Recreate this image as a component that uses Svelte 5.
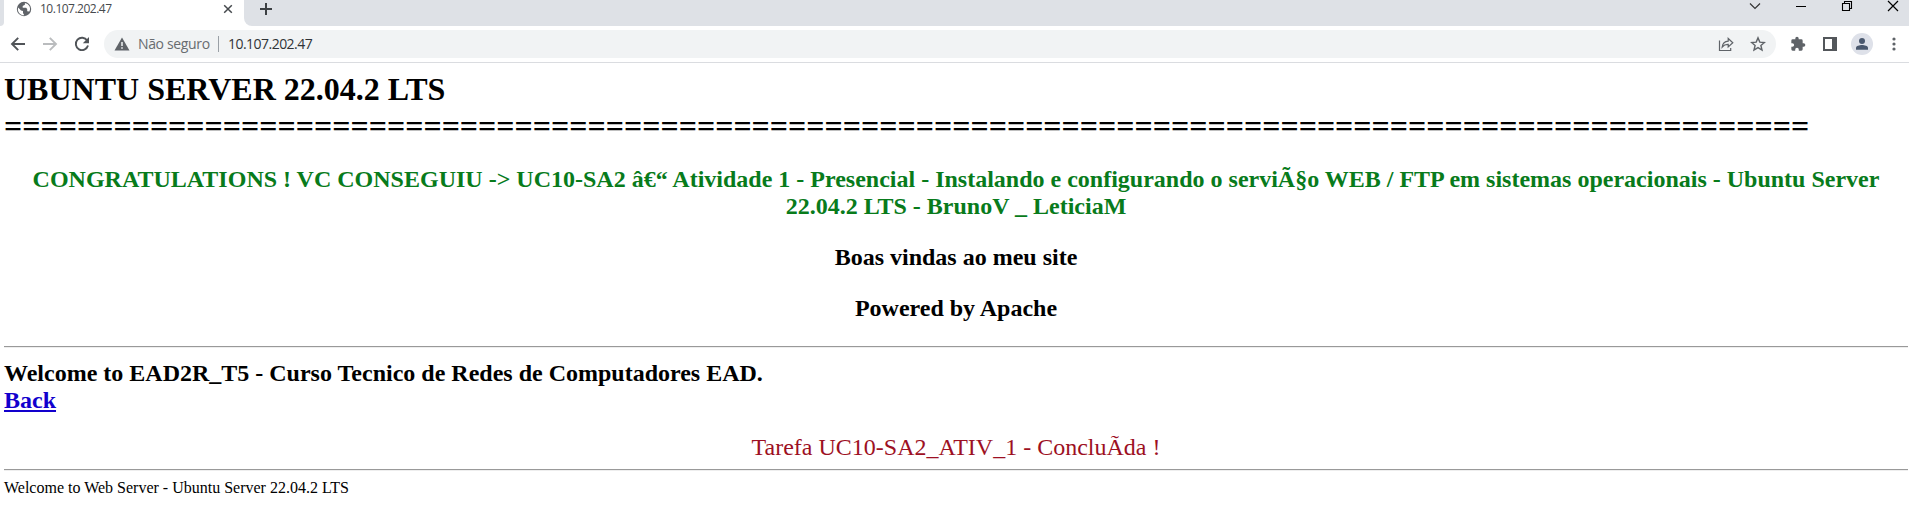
<script>
  const address = '10.107.202.47';
  const divider = '='.repeat(99);
</script>

<div class="browser">
  <div class="tabstrip">
    <div class="edge"></div>
    <div class="tab">
      <svg class="globe" width="16" height="16" viewBox="0 0 16 16">
        <circle cx="8" cy="8" r="7.2" fill="#5f6368" />
        <path d="M2.2 6.4 5 9.4 7 10v2.1l1.3 2.2A6 6 0 0 1 2.2 6.4Z" fill="#fff" />
        <path d="M8.9 1.9v1.8L6.7 5v1.8h3.4l1.1 1.1v2.3l2.2.3A6 6 0 0 0 8.9 1.9Z" fill="#fff" />
      </svg>
      <span class="tab-title">{address}</span>
      <svg width="10" height="10" viewBox="0 0 10 10"><path d="m1.2 1.2 7.6 7.6m0-7.6L1.200 8.800" stroke="#45494d" stroke-width="1.5" /></svg>
    </div>
    <div class="rest">
      <svg width="14" height="14" viewBox="0 0 14 14"><path d="M7 1v12M1 7h12" stroke="#3c4043" stroke-width="2" /></svg>
      <div class="window">
        <svg width="12" height="14" viewBox="0 0 12 14"><path d="m1 4.500 5 5 5-5" fill="none" stroke="#333" stroke-width="1.2" /></svg>
        <svg width="12" height="14" viewBox="0 0 12 14"><path d="M1 7.500h10" stroke="#000" /></svg>
        <svg width="12" height="14" viewBox="0 0 12 14"><path d="M1.500 4.500h7v7h-7ZM3.500 4.500v-2h7v7h-2" fill="none" stroke="#000" stroke-width="1.100" /></svg>
        <svg width="12" height="14" viewBox="0 0 12 14"><path d="m1 2 10 10m0-10L1 12" stroke="#000" stroke-width="1.200" /></svg>
      </div>
    </div>
  </div>

  <div class="toolbar">
    <div class="nav">
      <svg width="16" height="16" viewBox="0 0 16 16"><path d="M15 8H2.500M8.200 1.800 2 8l6.200 6.200" fill="none" stroke="#505458" stroke-width="1.900" /></svg>
      <svg width="16" height="16" viewBox="0 0 16 16"><path d="M1 8h12.500M7.800 1.800 14 8l-6.200 6.200" fill="none" stroke="#babcbe" stroke-width="1.900" /></svg>
      <svg width="16" height="16" viewBox="0 0 16 16"><path d="M13.200 4.500A6.200 6.200 0 1 0 14 9.600" fill="none" stroke="#505458" stroke-width="1.900" /><path d="M15 1v6.200H8.800Z" fill="#505458" /></svg>
    </div>
    <div class="omnibox">
      <svg width="16" height="14" viewBox="0 0 16 14"><path d="M8 .5 15.500 13.500H.5Z" fill="#5f6368" /><path d="M8 5v4m0 1.200v1.600" stroke="#f1f3f4" stroke-width="1.500" /></svg>
      <span class="security">Não seguro</span>
      <span class="separator"></span>
      <span class="url">{address}</span>
      <div class="page-actions">
        <svg width="16" height="16" viewBox="0 0 16 16"><path d="M1.500 4.500v10h11.200v-2.500M4.200 11c.5-4 2.700-5.800 6-5.900V2.500L14.800 6.800l-4.600 4.100V8.400C7.500 8.300 5.800 9.100 4.200 11Z" fill="none" stroke="#5f6368" stroke-width="1.200" /></svg>
        <svg width="16" height="16" viewBox="0 0 16 16"><path d="m8 1.900 1.800 4.200 4.600.4-3.500 3 1.100 4.500L8 11.600 4 14l1.100-4.500-3.500-3 4.600-.4Z" fill="none" stroke="#5f6368" stroke-width="1.400" /></svg>
      </div>
    </div>
    <div class="actions">
      <svg width="16" height="16" viewBox="0 0 24 24"><path fill="#5f6368" d="M20.500 11H19V7a2 2 0 0 0-2-2h-4V3.500a2.500 2.500 0 0 0-5 0V5H4a2 2 0 0 0-2 2v3.800h1.500a2.700 2.700 0 0 1 0 5.400H2V20a2 2 0 0 0 2 2h3.800v-1.500a2.700 2.700 0 0 1 5.400 0V22H17a2 2 0 0 0 2-2v-4h1.500a2.500 2.500 0 0 0 0-5Z" /></svg>
      <svg width="14" height="14" viewBox="0 0 14 14"><path d="M1 1h12v12H1Z" fill="#fff" stroke="#53575b" stroke-width="2" /><path d="M9 1h4v12H9Z" fill="#53575b" /></svg>
      <span class="avatar"><svg width="14" height="14" viewBox="0 0 14 14"><circle cx="7" cy="4" r="3" fill="#4a586e" /><path d="M1 12.800v-2C1 8.900 4.500 8 7 8s6 .9 6 2.800v2Z" fill="#4a586e" /></svg></span>
      <svg width="4" height="14" viewBox="0 0 4 14" fill="#5f6368"><circle cx="2" cy="2" r="1.600" /><circle cx="2" cy="7" r="1.600" /><circle cx="2" cy="12" r="1.600" /></svg>
    </div>
  </div>

  <main>
    <h1>UBUNTU SERVER 22.04.2 LTS<br />{divider}</h1>
    <h2 class="congrats">CONGRATULATIONS ! VC CONSEGUIU -&gt; UC10-SA2 â€“ Atividade 1 - Presencial - Instalando e configurando o serviÃ§o WEB / FTP em sistemas operacionais - Ubuntu Server 22.04.2 LTS - BrunoV _ LeticiaM</h2>
    <h2>Boas vindas ao meu site</h2>
    <h2>Powered by Apache</h2>
    <hr />
    <div class="welcome">Welcome to EAD2R_T5 - Curso Tecnico de Redes de Computadores EAD.<br /><a href="#top">Back</a></div>
    <p class="task">Tarefa UC10-SA2_ATIV_1 - ConcluÃ­da !</p>
    <hr />
    <p class="footer">Welcome to Web Server - Ubuntu Server 22.04.2 LTS</p>
  </main>
</div>

<style>
  :global(body) { margin: 0; background: #fff; }
  .browser { height: 524px; overflow: hidden; background: #fff; }
  svg { display: block; flex: none; }
  .tabstrip { display: flex; height: 26px; background: #fff; }
  .edge { width: 4px; background: #dee1e6; border-bottom-right-radius: 8px; }
  .tab { box-sizing: border-box; width: 240px; display: flex; align-items: center; padding: 0 11px 8px 12px; }
  .globe { margin-right: 8px; }
  .tab-title { flex: 1; font: 12px/16px "Open Sans", sans-serif; letter-spacing: -0.5px; color: #45494d; }
  .rest { flex: 1; display: flex; align-items: center; justify-content: space-between; background: #dee1e6; border-bottom-left-radius: 8px; padding: 0 10px 8px 15px; }
  .window { display: flex; gap: 34px; margin-top: -7px; }
  .toolbar { display: flex; height: 36px; align-items: center; border-bottom: 1px solid #dadce0; }
  .nav { display: flex; gap: 16px; padding: 0 14px 0 10px; }
  .omnibox { flex: 1; height: 28px; box-sizing: border-box; display: flex; align-items: center; padding: 0 10px 0 10px; border-radius: 14px; background: #f1f3f4; font: 14px/20px "Open Sans", sans-serif; white-space: nowrap; }
  .security { width: 71px; margin-left: 8px; color: #686c70; letter-spacing: -0.35px; }
  .separator { width: 1px; height: 16px; margin: 0 9px 0 9px; background: #9aa0a6; }
  .url { color: #303337; letter-spacing: -0.53px; }
  .page-actions { display: flex; gap: 16px; margin-left: auto; }
  .actions { display: flex; align-items: center; padding: 0 13px 0 14px; }
  .actions > :nth-child(2) { margin-left: 17px; }
  .avatar { display: grid; place-items: center; width: 22px; height: 22px; margin: 0 19px 0 14px; border-radius: 50%; background: #dee1e9; }
  main { padding: 8px 1px 0 4px; font-family: "Liberation Serif", serif; color: #000; }
  h1, h2, p { margin: 0; }
  h1 { font-size: 32px; line-height: 37px; white-space: nowrap; }
  h2 { margin-top: 24px; font-size: 24px; line-height: 27px; text-align: center; }
  .congrats { margin-top: 21px; padding: 0 20px; color: #087b1b; }
  hr { height: 1px; margin: 24px 0 12px; border: 0; background: #999; border-bottom: 1px solid #eee; }
  .welcome { font-size: 24px; line-height: 27px; font-weight: 700; }
  a { color: #1200cd; }
  .task { margin: 20px 0 8px; font-size: 24px; line-height: 27px; text-align: center; color: #9d1023; }
  .task + hr { margin: 8px 0; }
  .footer { font-size: 16px; line-height: 18px; }
</style>
